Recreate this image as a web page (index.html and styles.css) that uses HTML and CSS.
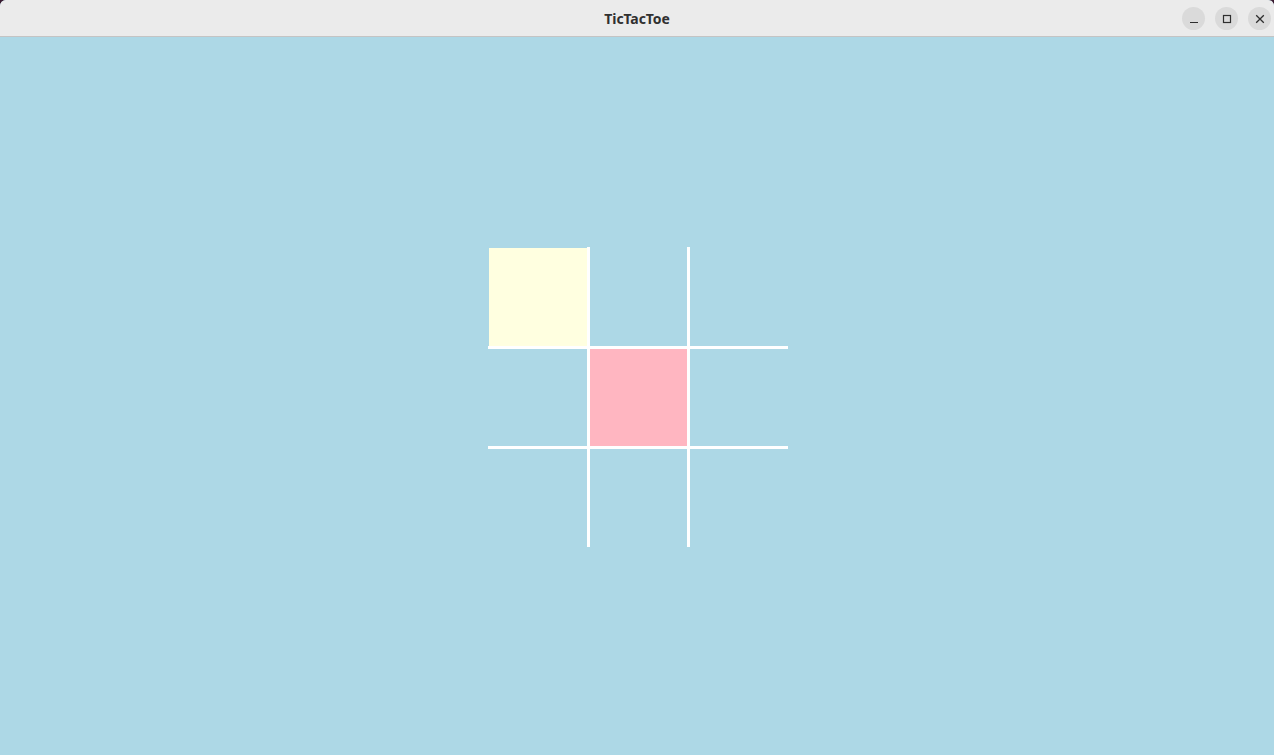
FILE: index.html
```html
<!DOCTYPE html>
<html>
<head>
<meta charset="utf-8">
<title>TicTacToe</title>
<link rel="stylesheet" href="styles.css">
</head>
<body>
<div class="window">
  <header class="titlebar">
    <div class="title">TicTacToe</div>
    <div class="controls">
      <button class="ctl" aria-label="Minimize">
        <svg width="10" height="10" viewBox="0 0 10 10"><path d="M1 8.5h8" stroke="#2e2e2e" stroke-width="1.2"/></svg>
      </button>
      <button class="ctl" aria-label="Maximize">
        <svg width="10" height="10" viewBox="0 0 10 10"><rect x="1.5" y="1.5" width="7" height="7" fill="none" stroke="#2e2e2e" stroke-width="1.2"/></svg>
      </button>
      <button class="ctl" aria-label="Close">
        <svg width="10" height="10" viewBox="0 0 10 10"><path d="M1.2 1.2L8.8 8.8M8.8 1.2L1.2 8.8" stroke="#2e2e2e" stroke-width="1.3"/></svg>
      </button>
    </div>
  </header>
  <main class="content">
    <div class="board-wrap">
      <svg class="board" width="300" height="300" viewBox="0 0 300 300">
        <rect x="1" y="1" width="98" height="98" fill="#ffffe0"/>
        <rect x="101" y="101" width="98" height="98" fill="#ffb6c1"/>
        <rect x="99" y="0" width="3" height="300" fill="#ffffff"/>
        <rect x="199" y="0" width="3" height="300" fill="#ffffff"/>
        <rect x="0" y="99" width="300" height="3" fill="#ffffff"/>
        <rect x="0" y="199" width="300" height="3" fill="#ffffff"/>
      </svg>
    </div>
  </main>
</div>
</body>
</html>
```

FILE: styles.css
```css
html, body {
  margin: 0;
  padding: 0;
  width: 1274px;
  height: 755px;
  overflow: hidden;
  background: #3a1a30;
}

.window {
  width: 1274px;
  height: 755px;
  display: flex;
  flex-direction: column;
  border-radius: 6px 6px 0 0;
  overflow: hidden;
  background: #add8e6;
}

.titlebar {
  height: 36px;
  flex: none;
  background: #ebebeb;
  border-bottom: 1px solid #c4c4c4;
  position: relative;
  display: flex;
  align-items: center;
  justify-content: center;
}

.title {
  font-family: "Noto Sans", "DejaVu Sans", sans-serif;
  font-weight: 700;
  font-size: 14px;
  color: #303030;
  letter-spacing: -0.1px;
}

.controls {
  position: absolute;
  right: 3px;
  top: 7px;
  display: flex;
  gap: 10px;
}

.ctl {
  width: 23px;
  height: 23px;
  border-radius: 50%;
  border: none;
  padding: 0;
  margin: 0;
  background: #dadada;
  display: flex;
  align-items: center;
  justify-content: center;
}

.ctl svg {
  display: block;
}

.content {
  flex: 1;
  display: flex;
  align-items: center;
  justify-content: center;
  background: #add8e6;
}

.board-wrap {
  width: 300px;
  height: 300px;
  padding: 2px 0 0 2px;
}

.board {
  display: block;
}
```
